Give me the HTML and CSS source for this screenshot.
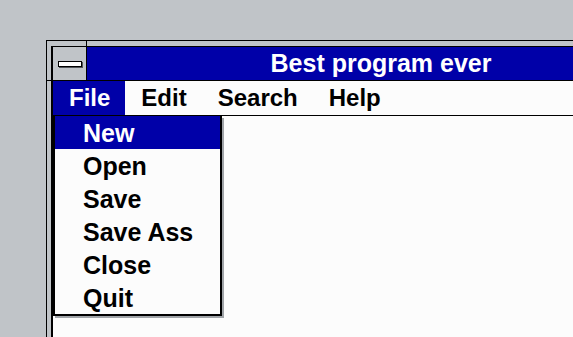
FILE: index.html
```html
<!DOCTYPE html>
<html lang="en">
<head>
    <meta charset="UTF-8">
    <meta name="viewport" content="width=device-width, initial-scale=1.0">
    <title>Best program ever</title>
    <link rel="stylesheet" href="styles.css">
</head>
<body>

<div class="window">
    <div class="inner">
        <div class="titlebar">
            <div class="sysbox"><div class="minus"></div></div>
            <div class="title">Best program ever</div>
        </div>
        <div class="menubar">
            <div class="menu-item open">File
                <div class="dropdown">
                    <div class="drop-item selected">New</div>
                    <div class="drop-item">Open</div>
                    <div class="drop-item">Save</div>
                    <div class="drop-item">Save Ass</div>
                    <div class="drop-item">Close</div>
                    <div class="drop-item">Quit</div>
                </div>
            </div>
            <div class="menu-item">Edit</div>
            <div class="menu-item">Search</div>
            <div class="menu-item">Help</div>
        </div>
        <div class="client"></div>
    </div>
</div>

</body>
</html>
```

FILE: styles.css
```css
body {
    font-family: "Liberation Sans", Arial, sans-serif;
    font-weight: bold;
    font-size: 25px;
    margin: 0;
    padding: 40px 0 0 46px;
    height: 297px;
    overflow: hidden;
    background-color: #c0c4c8;
}
.window {
    position: relative;
    box-sizing: border-box;
    width: 527px;
    height: 100%;
    border-top: 1px solid #000;
    border-left: 1px solid #000;
    padding: 5px 0 0 4px;
}
/* resize corner marks through the frame */
.window::before {
    content: "";
    position: absolute;
    left: 39px;
    top: 0;
    width: 1px;
    height: 6px;
    background: #000;
}
.window::after {
    content: "";
    position: absolute;
    left: 0;
    top: 39px;
    width: 5px;
    height: 1px;
    background: #000;
}
.inner {
    height: 100%;
    box-sizing: border-box;
    border-top: 1px solid #000;
    border-left: 2px solid #000;
    background-color: #fcfcfc;
}
.titlebar {
    display: flex;
    height: 33px;
    border-bottom: 1px solid #000;
}
.sysbox {
    width: 33px;
    border-right: 1px solid #000;
    background-color: #c0c4c8;
    display: flex;
    align-items: center;
    justify-content: center;
}
.minus {
    width: 22px;
    height: 4px;
    background: #fff;
    border: 1px solid #000;
    box-shadow: 1px 1px 0 #505458;
}
/* window runs off screen, so the centre of the title sits further right */
.title {
    flex: 1;
    padding-left: 102px;
    background-color: #0000a8;
    color: #fff;
    display: flex;
    align-items: center;
    justify-content: center;
}
.menubar {
    display: flex;
    height: 34px;
    border-bottom: 1px solid #000;
    font-size: 24px;
}
.menu-item {
    position: relative;
    line-height: 34px;
    padding: 0 15px 0 16px;
    color: #000;
}
.menu-item.open {
    background-color: #0000a8;
    color: #fff;
}
.dropdown {
    position: absolute;
    left: 0;
    top: 35px;
    width: 165px;
    border: 2px solid #000;
    border-top: none;
    background-color: #fcfcfc;
    box-shadow: 2px 2px 0 #a0a4a8;
    font-size: 25px;
}
.drop-item {
    height: 33px;
    line-height: 33px;
    padding: 1px 0 0 28px;
    box-sizing: border-box;
    color: #000;
}
.drop-item.selected {
    background-color: #0000a8;
    color: #fff;
}
```
